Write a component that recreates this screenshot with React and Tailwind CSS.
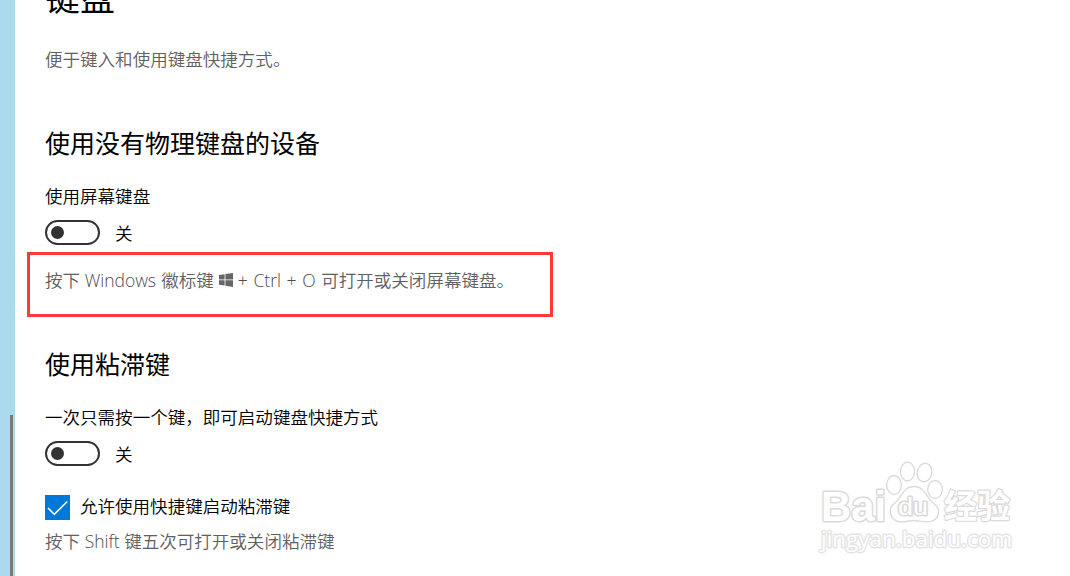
const Toggle = ({ label }) => (
  <div className="flex h-[25px] items-center">
    <button aria-label={label} className="flex h-[25px] w-[55px] items-center rounded-full border-[2.5px] border-[#333333] pl-[3.5px]">
      <span className="h-[13px] w-[13px] rounded-full bg-[#333333]" />
    </button>
    <span className="ml-[15px] mt-px leading-[25px]">关</span>
  </div>
);

const Latin = ({ children }) => <span className="text-[17.5px] font-light text-[#4c4c4c]">{children}</span>;

const WindowsLogo = () => (
  <svg viewBox="0 0 14 14" className="ml-[5px] mr-[5px] h-[14px] w-[14px] shrink-0" fill="#666666">
    <path d="M0 2 5.6 1.2V6.5H0zM6.4 1.1 14 0V6.5H6.4zM0 7.3H5.6V12.6L0 11.8zM6.4 7.3H14V14L6.4 12.8z" />
  </svg>
);

const Watermark = () => (
  <svg
    viewBox="0 0 210 100"
    className="absolute left-[812px] top-[456px] h-[100px] w-[210px]"
    fill="#ffffff"
    stroke="#dadada"
    strokeWidth="1.3"
    strokeLinejoin="round"
  >
    <g fontWeight="700">
      <text x="9" y="64.5" fontSize="43" fontFamily="'Liberation Sans', sans-serif" textLength="65" lengthAdjust="spacingAndGlyphs" strokeWidth="3" paintOrder="stroke">Bai</text>
      <text x="132" y="62" fontSize="33" fontFamily="'Noto Sans CJK SC', sans-serif" textLength="66" lengthAdjust="spacingAndGlyphs" strokeWidth="2.4" paintOrder="stroke">经验</text>
    </g>
    {/* paw */}
    <ellipse cx="82" cy="29" rx="7.3" ry="9.5" />
    <ellipse cx="95.5" cy="15.5" rx="7" ry="9.5" />
    <ellipse cx="112.5" cy="16.5" rx="7.3" ry="9.3" transform="rotate(12 112.5 16.5)" />
    <ellipse cx="123" cy="33.5" rx="7.3" ry="9" />
    <path d="M102 30.5C91 30.5 90 41 84 46C79 50 77 53 79 59C82 68 92 66 97 65Q102 64 107 65C113 66 123 68 126 59C128 53 125 50 120 46C114 41 113 30.5 102 30.5Z" />
    <text x="86" y="58.5" fontSize="23" fontFamily="'Liberation Sans', sans-serif" textLength="30" lengthAdjust="spacingAndGlyphs" strokeWidth="3" paintOrder="stroke">du</text>
    <text x="9" y="90.5" fontSize="22" fontWeight="400" fontFamily="'Open Sans', sans-serif" stroke="#e4e4e4" textLength="191" lengthAdjust="spacingAndGlyphs" strokeWidth="2.8" paintOrder="stroke">jingyan.baidu.com</text>
  </svg>
);

const App = () => {
  return (
    <div className="relative flex h-[576px] w-[1070px] overflow-hidden bg-white font-['Open_Sans','Noto_Sans_CJK_SC',sans-serif] text-[17.55px] font-[350] text-black">
      <aside className="flex w-[15px] shrink-0 items-end bg-[#abd9ee]">
        <div className="ml-[10px] h-[161px] w-[3px] bg-[#7b7b7b]" />
      </aside>

      <main className="flex flex-1 flex-col whitespace-nowrap pl-[30px]">
        <h1 className="-mt-[22px] h-[40px] text-[35px] font-normal leading-[40px]">键盘</h1>
        <p className="mt-[28px] h-[26px] leading-[26px] text-[#606060]">便于键入和使用键盘快捷方式。</p>

        <section>
          <h2 className="mt-[53px] h-[36px] text-[25px] font-normal leading-[36px]">使用没有物理键盘的设备</h2>
          <p className="mt-[22px] h-[26px] leading-[26px]">使用屏幕键盘</p>
          <div className="mt-[11px]">
            <Toggle label="使用屏幕键盘" />
          </div>
          <div className="-ml-[18px] mt-[7px] flex h-[65px] w-[526px] items-start border-[3px] border-[#fb3a3a] pl-[15px] pt-[12px]">
            <p className="flex h-[26px] items-center leading-[26px] text-[#606060]">
              <span>按下 <span className="inline-block w-[72px]"><Latin>Windows</Latin></span> 徽标键</span>
              <WindowsLogo />
              <span className="[word-spacing:1.1px]"><Latin>+ Ctrl + O</Latin> 可打开或关闭屏幕键盘。</span>
            </p>
          </div>
        </section>

        <section>
          <h2 className="mt-[29px] h-[36px] text-[25px] font-normal leading-[36px]">使用粘滞键</h2>
          <p className="mt-[22px] h-[26px] leading-[26px]">一次只需按一个键，即可启动键盘快捷方式</p>
          <div className="mt-[11px]">
            <Toggle label="使用粘滞键" />
          </div>
          <div className="mt-[28px] flex h-[26px] items-center">
            <span className="flex h-[25px] w-[25px] items-center justify-center bg-[#0078d7]">
              <svg viewBox="0 0 25 25" className="h-[25px] w-[25px]" fill="none" stroke="#ffffff" strokeWidth="1.6">
                <path d="M3 13 9.3 19.3 22.3 6.5" />
              </svg>
            </span>
            <span className="-mt-[2px] ml-[10px] leading-[26px]">允许使用快捷键启动粘滞键</span>
          </div>
          <p className="mt-[8px] h-[26px] leading-[26px] text-[#606060]">按下 <Latin>Shift</Latin> 键五次可打开或关闭粘滞键</p>
        </section>
      </main>

      <Watermark />
    </div>
  );
};

export default App;
